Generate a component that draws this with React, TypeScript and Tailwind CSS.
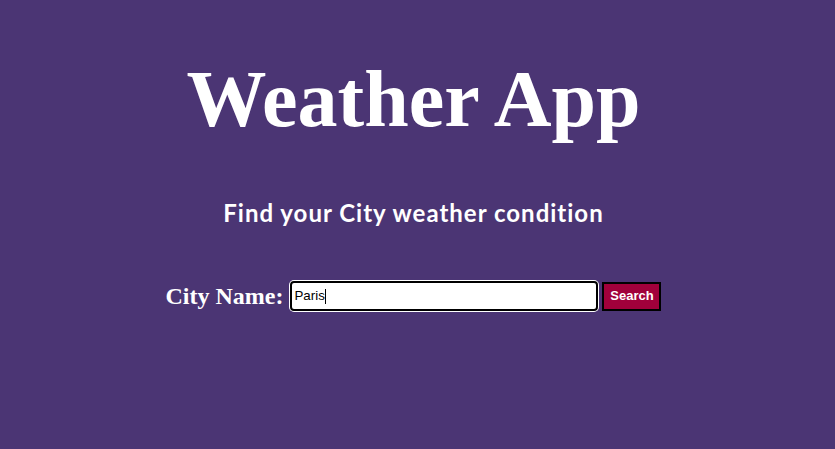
export default function App() {
  return (
    <div className="w-full h-[449px] bg-[#4b3574] flex flex-col items-center pr-[8px] text-white overflow-hidden">
      <h1 className="mt-[39px] text-[80px] font-bold leading-normal font-['Liberation_Serif',serif]">
        Weather App
      </h1>
      <h3 className="mt-[36px] text-[24px] tracking-[1px] font-bold leading-normal font-['Comic_Sans_MS',Lato,sans-serif]">
        Find your City weather condition
      </h3>
      <div className="mt-[47px] flex items-center">
        <label className="text-[24px] font-bold font-['Liberation_Serif',serif] mr-[7px]">City Name:</label>
        <div className="w-[308px] h-[30px] bg-white border-2 border-black rounded-[4px] shadow-[0_0_0_1px_white] flex items-center px-[2px] text-[13.33px] text-black font-['Liberation_Sans',Arial,sans-serif]">
          Paris<span className="w-px h-[15px] bg-black" />
        </div>
        <button className="ml-[4px] w-[59px] h-[29px] bg-[#a1003b] border-2 border-black text-white text-[13px] font-bold font-['Liberation_Sans',Arial,sans-serif]">
          Search
        </button>
      </div>
    </div>
  );
}
